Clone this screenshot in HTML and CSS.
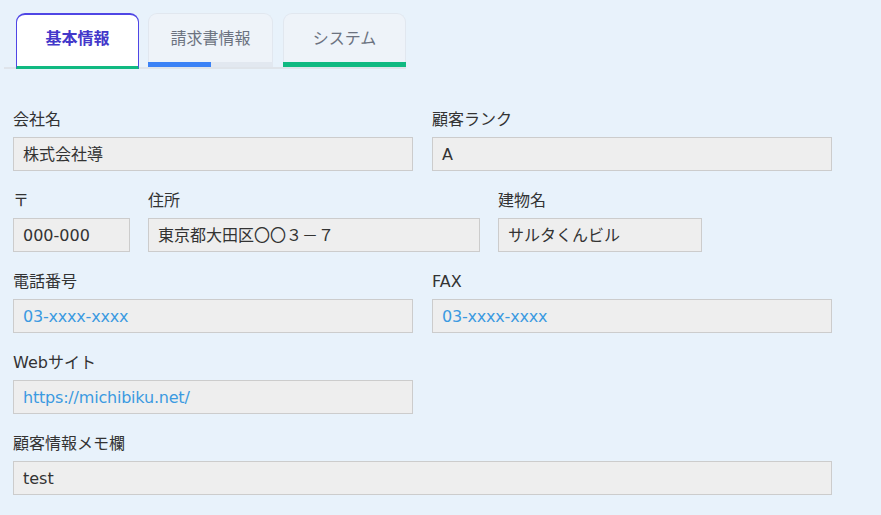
FILE: index.html
```html
<!DOCTYPE html>
<html lang="ja">
<head>
<meta charset="utf-8">
<title>顧客情報</title>
<link rel="stylesheet" href="styles.css">
</head>
<body>
<div class="page">
  <div class="tabs">
    <div class="tab tab-active">基本情報</div>
    <div class="tab tab-progress"><span class="tab-label">請求書情報</span><span class="bar"><span class="bar-fill bar-blue" style="width:50%"></span></span></div>
    <div class="tab tab-progress"><span class="tab-label">システム</span><span class="bar"><span class="bar-fill bar-green" style="width:100%"></span></span></div>
  </div>

  <div class="form">
    <div class="row row-two">
      <div class="field">
        <div class="label">会社名</div>
        <div class="input">株式会社導</div>
      </div>
      <div class="field">
        <div class="label">顧客ランク</div>
        <div class="input">A</div>
      </div>
    </div>

    <div class="row row-address">
      <div class="field">
        <div class="label">〒</div>
        <div class="input">000-000</div>
      </div>
      <div class="field">
        <div class="label">住所</div>
        <div class="input">東京都大田区〇〇３－７</div>
      </div>
      <div class="field">
        <div class="label">建物名</div>
        <div class="input">サルタくんビル</div>
      </div>
    </div>

    <div class="row row-two">
      <div class="field">
        <div class="label">電話番号</div>
        <div class="input link">03-xxxx-xxxx</div>
      </div>
      <div class="field">
        <div class="label">FAX</div>
        <div class="input link">03-xxxx-xxxx</div>
      </div>
    </div>

    <div class="row row-two">
      <div class="field">
        <div class="label">Webサイト</div>
        <div class="input link">https://michibiku.net/</div>
      </div>
    </div>

    <div class="row row-full">
      <div class="field">
        <div class="label">顧客情報メモ欄</div>
        <div class="input">test</div>
      </div>
    </div>
  </div>
</div>
</body>
</html>
```

FILE: styles.css
```css
* { box-sizing: border-box; }

html, body {
  margin: 0;
  padding: 0;
  background: #e8f2fb;
}

body {
  font-family: "DejaVu Sans", "Noto Sans CJK JP", sans-serif;
  font-size: 16px;
  color: #333333;
}

.page {
  width: 881px;
  height: 515px;
  overflow: hidden;
  padding-top: 13px;
}

.tabs {
  display: flex;
  align-items: flex-start;
  gap: 10px;
  margin-left: 4px;
  width: 402px;
  height: 56px;
  border-bottom: 2px solid #dfe4ea;
  padding-left: 12px;
}

.tab {
  height: 56px;
  border-radius: 9px 9px 0 0;
  font-family: "Noto Sans CJK JP", sans-serif;
  font-size: 16px;
  line-height: 24px;
  display: flex;
  flex-direction: column;
  align-items: center;
}

.tab-active {
  width: 123px;
  background: #ffffff;
  border: 1px solid #4f46e5;
  border-top-width: 2px;
  border-bottom: 3px solid #10b981;
  color: #4338ca;
  font-weight: 700;
  justify-content: center;
  padding-bottom: 7px;
  margin-right: -1px;
}

.tab-progress {
  height: 54px;
  background: #eef3f9;
  border: 1px solid #e1e7ef;
  border-bottom: none;
  color: #6b7280;
  justify-content: space-between;
  padding-top: 11px;
}

.tab-progress:nth-child(2) { width: 125px; }
.tab-progress:nth-child(3) { width: 123px; }

.tab-label { display: block; }

.bar {
  display: block;
  width: calc(100% + 2px);
  margin: 0 -1px;
  height: 5px;
  background: #e2e8f0;
}

.bar-fill {
  display: block;
  height: 100%;
}

.bar-blue { background: #3b82f6; }
.bar-green { background: #10b981; }

.form {
  padding: 38px 0 0 13px;
  display: flex;
  flex-direction: column;
  gap: 17px;
}

.row {
  display: flex;
  gap: 19px;
}

.row-two .field { width: 400px; }
.row-full .field { width: 819px; }

.row-address { gap: 18px; }
.row-address .field:nth-child(1) { width: 117px; }
.row-address .field:nth-child(2) { width: 332px; }
.row-address .field:nth-child(3) { width: 204px; }

.label {
  height: 25px;
  line-height: 24px;
  padding-top: 1px;
  margin-bottom: 5px;
  white-space: nowrap;
}

.input {
  height: 34px;
  line-height: 33px;
  border: 1px solid #cccccc;
  background: #eeeeee;
  padding: 0 9px;
  color: #333333;
  white-space: nowrap;
  overflow: hidden;
}

.input.link { color: #3b9ae1; letter-spacing: -0.2px; }
```
